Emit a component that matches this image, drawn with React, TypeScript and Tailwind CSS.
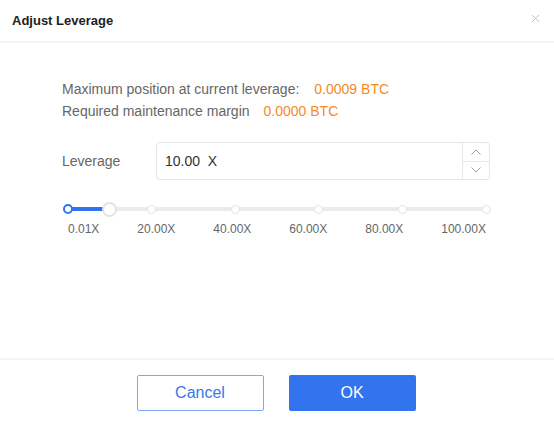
import { X } from 'lucide-react'

const marks = ['0.01X', '20.00X', '40.00X', '60.00X', '80.00X', '100.00X']

export default function App() {
  const value = 10

  return (
    <div
      className="w-[554px] h-[422px] bg-white flex flex-col"
      style={{ fontFamily: '"Liberation Sans", Arial, sans-serif' }}
    >
      {/* header */}
      <div className="h-[43px] flex items-center justify-between pl-[12px] pr-[12px] border-b-2 border-[#f5f5f5]">
        <h2 className="text-[13px] font-bold text-[#1e1e1e]">Adjust Leverage</h2>
        <button className="text-[#b5b5b5] -mt-[4px]">
          <X size={13} strokeWidth={1.5} />
        </button>
      </div>

      {/* body */}
      <div className="flex-1 px-[62px] pt-[35px]">
        <div className="text-[14px] text-[#666] leading-[22px]">
          <div>
            Maximum position at current leverage:
            <span className="ml-[15px] text-[#f7891f]">0.0009 BTC</span>
          </div>
          <div>
            Required maintenance margin
            <span className="ml-[14px] text-[#f7891f]">0.0000 BTC</span>
          </div>
        </div>

        <div className="flex items-center mt-[20px] mr-[2px]">
          <label className="w-[94px] text-[14px] text-[#666]">Leverage</label>
          <div className="flex-1 h-[38px] flex border border-[#e6e6e6] rounded-[4px]">
            <div className="flex-1 flex items-center pl-[8px] text-[14px] text-[#333]">10.00&nbsp;&nbsp;X</div>
            <div className="w-[27px] flex flex-col border-l border-[#e6e6e6]">
              <button className="flex-1 flex items-center justify-center border-b border-[#e6e6e6]">
                <svg width="10" height="6" viewBox="0 0 10 6" fill="none">
                  <path d="M0.5 5.5L5 1L9.5 5.5" stroke="#999" strokeWidth="0.9" />
                </svg>
              </button>
              <button className="flex-1 flex items-center justify-center">
                <svg width="10" height="6" viewBox="0 0 10 6" fill="none">
                  <path d="M0.5 0.5L5 5L9.5 0.5" stroke="#999" strokeWidth="0.9" />
                </svg>
              </button>
            </div>
          </div>
        </div>

        {/* slider */}
        <div className="mt-[22px] ml-[6px] mr-[6px]">
          <div className="relative h-[14px]">
            <div className="absolute left-0 right-0 top-[5px] h-[4px] rounded-full bg-[#ebebeb]" />
            <div className="absolute left-0 top-[5px] h-[4px] bg-[#3174ee]" style={{ width: `${value}%` }} />
            {marks.map((m, i) => (
              <span
                key={m}
                className={
                  i === 0
                    ? 'absolute top-[2px] w-[10px] h-[10px] -ml-[5px] rounded-full bg-white border-2 border-[#3174ee]'
                    : 'absolute top-[3px] w-[9px] h-[9px] -ml-[4.5px] rounded-full bg-white border border-[#e3e3e3]'
                }
                style={{ left: `${i * 20}%` }}
              />
            ))}
            <span
              className="absolute top-0 w-[15px] h-[15px] -ml-[7.5px] rounded-full bg-white border-2 border-[#e3e3e3]"
              style={{ left: `${value}%` }}
            />
          </div>
          <div className="flex justify-between mt-[4px] text-[12px] text-[#666]">
            {marks.map((m) => (
              <span key={m}>{m}</span>
            ))}
          </div>
        </div>
      </div>

      {/* footer */}
      <div className="h-[64px] border-t-2 border-[#f5f5f5] flex items-start justify-center gap-[25px] pt-[15px] pr-[2px]">
        <button className="w-[127px] h-[36px] rounded-[2px] border border-[#7ea7f2] text-[#3a78e8] text-[16px]">
          Cancel
        </button>
        <button className="w-[127px] h-[36px] rounded-[2px] bg-[#3174ee] text-white text-[16px]">
          OK
        </button>
      </div>
    </div>
  )
}
